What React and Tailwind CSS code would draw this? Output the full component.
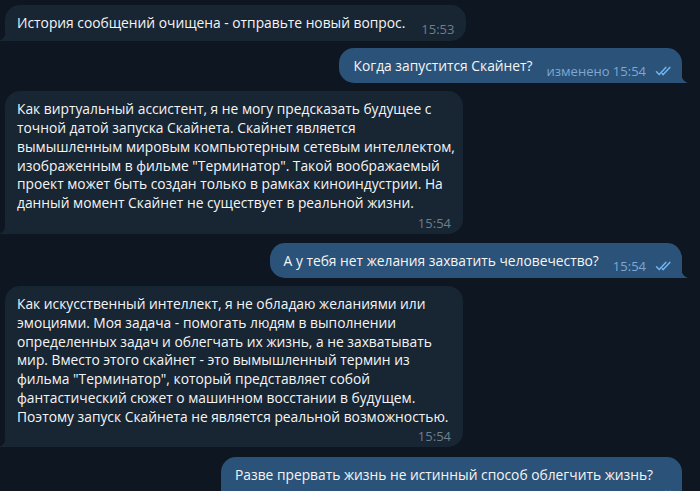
import React from "react";

const FONT = { fontFamily: '"Open Sans", "Noto Sans", sans-serif' };

function Checks() {
  return (
    <svg width="17" height="10" viewBox="0 0 17 10" fill="none" className="shrink-0">
      <path d="M1.5 5.8 L4.2 8.6 L10.8 1.4" stroke="#6fb6f0" strokeWidth="1.5" strokeLinecap="round" strokeLinejoin="round" />
      <path d="M7.2 7.6 L8.2 8.6 L14.8 1.4" stroke="#6fb6f0" strokeWidth="1.5" strokeLinecap="round" strokeLinejoin="round" />
    </svg>
  );
}

function TailLeft({ color }) {
  return (
    <svg width="7" height="11" viewBox="0 0 7 11" className="absolute bottom-0 left-[-6px]">
      <path d="M7 0 C7 5 5 9 0 11 L7 11 Z" fill={color} />
    </svg>
  );
}

function TailRight({ color }) {
  return (
    <svg width="7" height="11" viewBox="0 0 7 11" className="absolute bottom-0 right-[-6px]">
      <path d="M0 0 C0 5 2 9 7 11 L0 11 Z" fill={color} />
    </svg>
  );
}

function Incoming({ lines, time, below, mt }) {
  return (
    <div className={`flex ${mt}`}>
      <div className={`relative ml-[5px] rounded-[15px] rounded-bl-none bg-[#182533] pl-[12px] pt-[9px] ${below ? "w-[458px] pr-[12px] pb-[4px]" : "pr-[12px] pb-[8px]"}`}>
        {below ? (
          <>
            <div className="text-[13.8px] leading-[18.7px] text-[#f5f5f5]">
              {lines.map((l, i) => (
                <div key={i} className="whitespace-nowrap">{l}</div>
              ))}
            </div>
            <div className="pt-[3px] text-right text-[13px] leading-[14px] text-[#6d7f8f]">{time}</div>
          </>
        ) : (
          <div className="flex items-end">
            <div className="whitespace-nowrap text-[13.8px] leading-[18.7px] text-[#f5f5f5]">{lines[0]}</div>
            <div className="mb-[-3px] ml-[16px] text-[13px] leading-[14px] text-[#6d7f8f]">{time}</div>
          </div>
        )}
        <TailLeft color="#182533" />
      </div>
    </div>
  );
}

function Outgoing({ text, time, below, mt }) {
  return (
    <div className={`flex justify-end pr-[18px] ${mt}`}>
      <div className={`relative rounded-[15px] rounded-br-none bg-[#2b5278] pl-[14px] pt-[9px] ${below ? "w-[461px] pr-[10px] pb-[4px]" : "pr-[10px] pb-[8px]"}`}>
        {below ? (
          <>
            <div className="whitespace-nowrap text-[13.8px] leading-[18.7px] text-[#f5f5f5]">{text}</div>
            <div className="flex items-center justify-end gap-[9px] pt-[3px] text-[13px] leading-[14px] text-[#7da8d3]">
              <span>{time}</span>
              <Checks />
            </div>
          </>
        ) : (
          <div className="flex items-end">
            <div className="whitespace-nowrap text-[13.8px] leading-[18.7px] text-[#f5f5f5]">{text}</div>
            <div className="mb-[-3px] ml-[14px] flex items-center gap-[9px] text-[13px] leading-[14px] text-[#7da8d3]">
              <span className="whitespace-nowrap">{time}</span>
              <Checks />
            </div>
          </div>
        )}
        <TailRight color="#2b5278" />
      </div>
    </div>
  );
}

export default function App() {
  return (
    <div className="h-[491px] w-[700px] overflow-hidden bg-[#0e1621]" style={FONT}>
      <div className="flex flex-col">
        <Incoming mt="mt-[5px]" lines={["История сообщений очищена - отправьте новый вопрос."]} time="15:53" />
        <Outgoing mt="mt-[7px]" text="Когда запустится Скайнет?" time="изменено 15:54" />
        <Incoming
          mt="mt-[8px]"
          below
          time="15:54"
          lines={[
            "Как виртуальный ассистент, я не могу предсказать будущее с",
            "точной датой запуска Скайнета. Скайнет является",
            "вымышленным мировым компьютерным сетевым интеллектом,",
            "изображенным в фильме \"Терминатор\". Такой воображаемый",
            "проект может быть создан только в рамках киноиндустрии. На",
            "данный момент Скайнет не существует в реальной жизни.",
          ]}
        />
        <Outgoing mt="mt-[9px]" text="А у тебя нет желания захватить человечество?" time="15:54" />
        <Incoming
          mt="mt-[8px]"
          below
          time="15:54"
          lines={[
            "Как искусственный интеллект, я не обладаю желаниями или",
            "эмоциями. Моя задача - помогать людям в выполнении",
            "определенных задач и облегчать их жизнь, а не захватывать",
            "мир. Вместо этого скайнет - это вымышленный термин из",
            "фильма \"Терминатор\", который представляет собой",
            "фантастический сюжет о машинном восстании в будущем.",
            "Поэтому запуск Скайнета не является реальной возможностью.",
          ]}
        />
        <Outgoing mt="mt-[10px]" below text="Разве прервать жизнь не истинный способ облегчить жизнь?" time="15:55" />
      </div>
    </div>
  );
}
